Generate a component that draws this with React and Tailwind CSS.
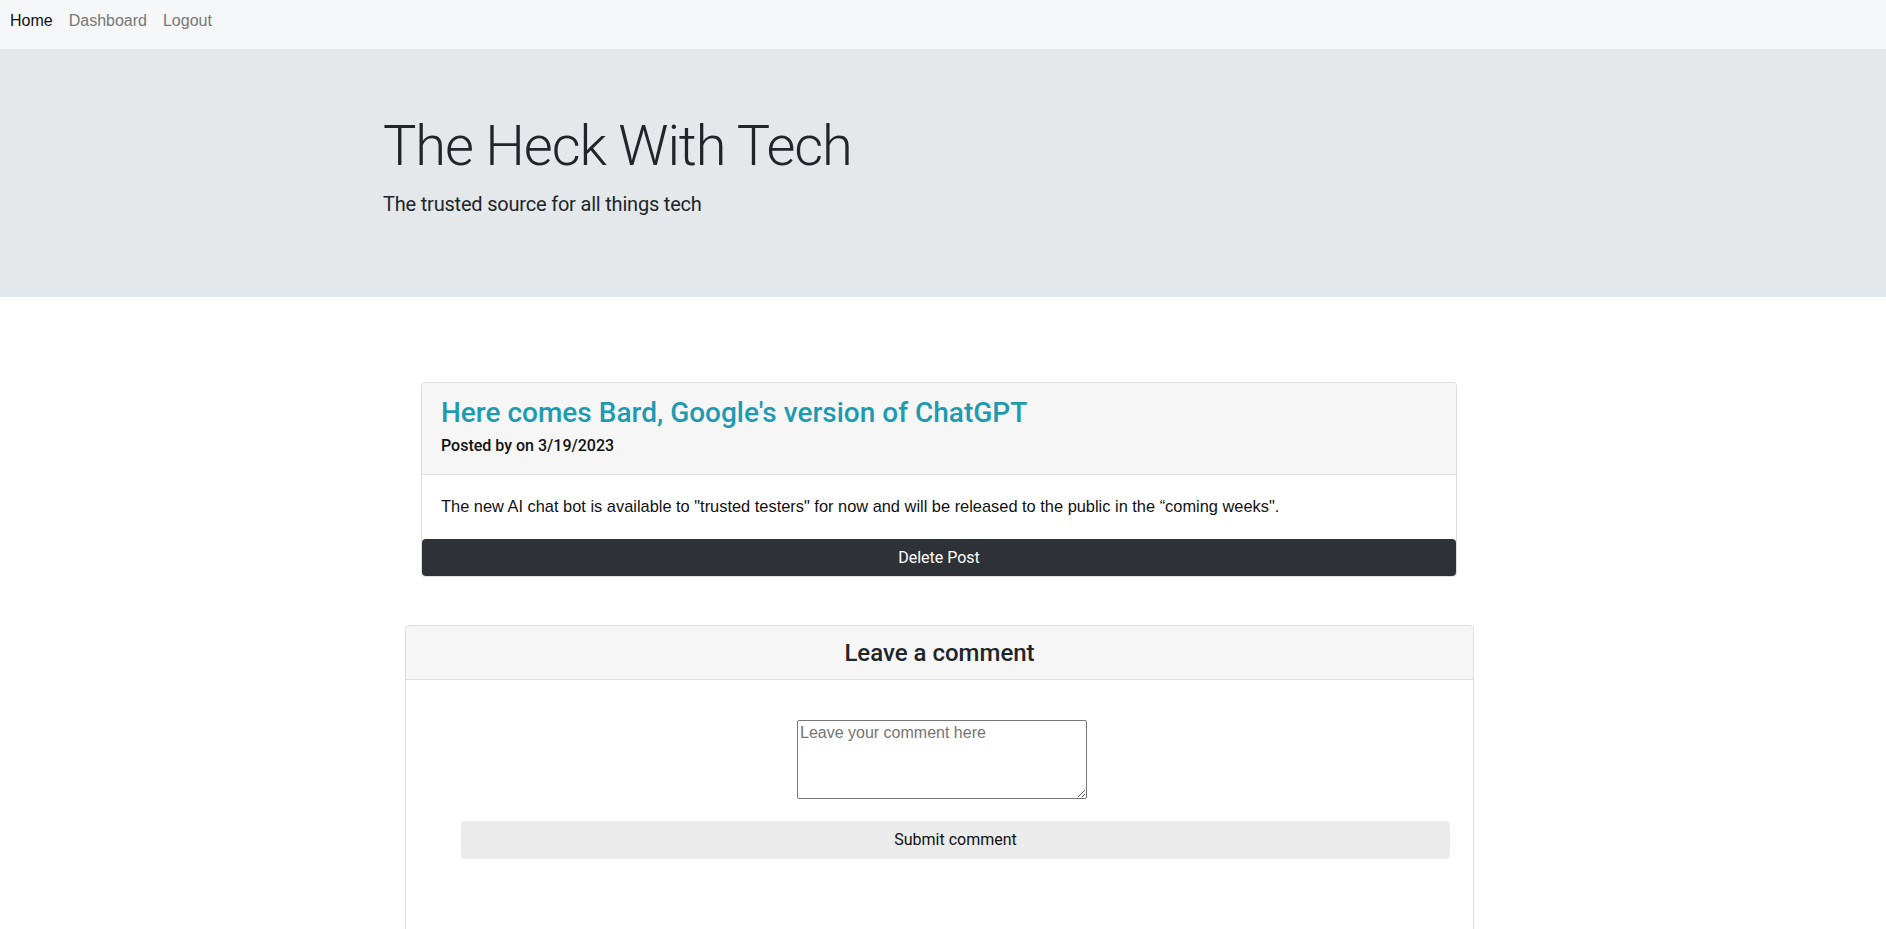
import React from 'react';

const sans = { fontFamily: '"Liberation Sans", Arial, sans-serif' };

const Navbar = () => (
  <nav className="h-[49px] bg-[#f6f7f9] flex items-center pb-[7px] px-[10px] gap-[16px] text-[16px] font-['Liberation_Sans',Arial,sans-serif]">
    <a className="text-[#111]">Home</a>
    <a className="text-[#777]">Dashboard</a>
    <a className="text-[#777]">Logout</a>
  </nav>
);

const Jumbotron = () => (
  <header className="h-[248px] bg-[#e4e8eb] pt-[64px]">
    <div className="w-[1140px] mx-auto px-[10px] text-[#212529]">
      <h1 className="text-[56px] leading-[67px] font-light tracking-[-0.02em] mb-[9px] font-['Roboto',sans-serif]">
        The Heck With Tech
      </h1>
      <p className="text-[20px] leading-[30px] font-['Roboto',sans-serif] tracking-[-0.01em]">
        The trusted source for all things tech
      </p>
    </div>
  </header>
);

const PostCard = () => (
  <div className="w-[1036px] border border-[#dedede] rounded-[4px] bg-white">
    <div className="bg-[#f6f6f6] border-b border-[#dedede] px-[19px] pt-[13px] pb-[16px] rounded-t-[4px]">
      <h3 className="text-[28px] leading-[34px] font-medium text-[#1f9bb1] font-['Roboto',sans-serif]">
        Here comes Bard, Google's version of ChatGPT
      </h3>
      <p className="mt-[4px] text-[16px] leading-[24px] font-medium text-[#111] font-['Roboto',sans-serif]">
        Posted by on 3/19/2023
      </p>
    </div>
    <div className="px-[19px] pt-[19px] pb-[21px] text-[16.4px] leading-[24px] text-[#111]" style={sans}>
      The new AI chat bot is available to "trusted testers" for now and will be released to the public in the “coming weeks".
    </div>
    <button className="w-full h-[37px] bg-[#2e3236] text-white text-[16px] rounded-[4px] font-['Roboto',sans-serif]">
      Delete Post
    </button>
  </div>
);

const CommentCard = () => (
  <div className="w-[1069px] border border-[#dedede] rounded-[4px] bg-white">
    <div className="h-[54px] bg-[#f6f6f6] border-b border-[#dedede] flex items-center justify-center rounded-t-[4px]">
      <h4 className="text-[24px] font-medium text-[#212529] font-['Roboto',sans-serif]">Leave a comment</h4>
    </div>
    <div className="pt-[40px] pb-[90px]">
      <div className="flex justify-center pl-[5px]">
        <textarea
          placeholder="Leave your comment here"
          className="w-[290px] h-[79px] border border-[#767676] rounded-[2px] p-[2px] text-[16px] leading-[20px] placeholder:text-[#757575] font-['Liberation_Sans',Arial,sans-serif]"
        />
      </div>
      <div className="ml-[55px] mr-[23px] mt-[22px]">
        <button className="w-full h-[38px] bg-[#ebebeb] rounded-[4px] text-[16px] text-[#111] font-['Roboto',sans-serif]">
          Submit comment
        </button>
      </div>
    </div>
  </div>
);

export default function App() {
  return (
    <div className="min-h-screen bg-white">
      <Navbar />
      <Jumbotron />
      <main className="flex flex-col items-center pr-[8px] pt-[85px] gap-[48px]">
        <PostCard />
        <div className="pl-[1px]">
          <CommentCard />
        </div>
      </main>
    </div>
  );
}
